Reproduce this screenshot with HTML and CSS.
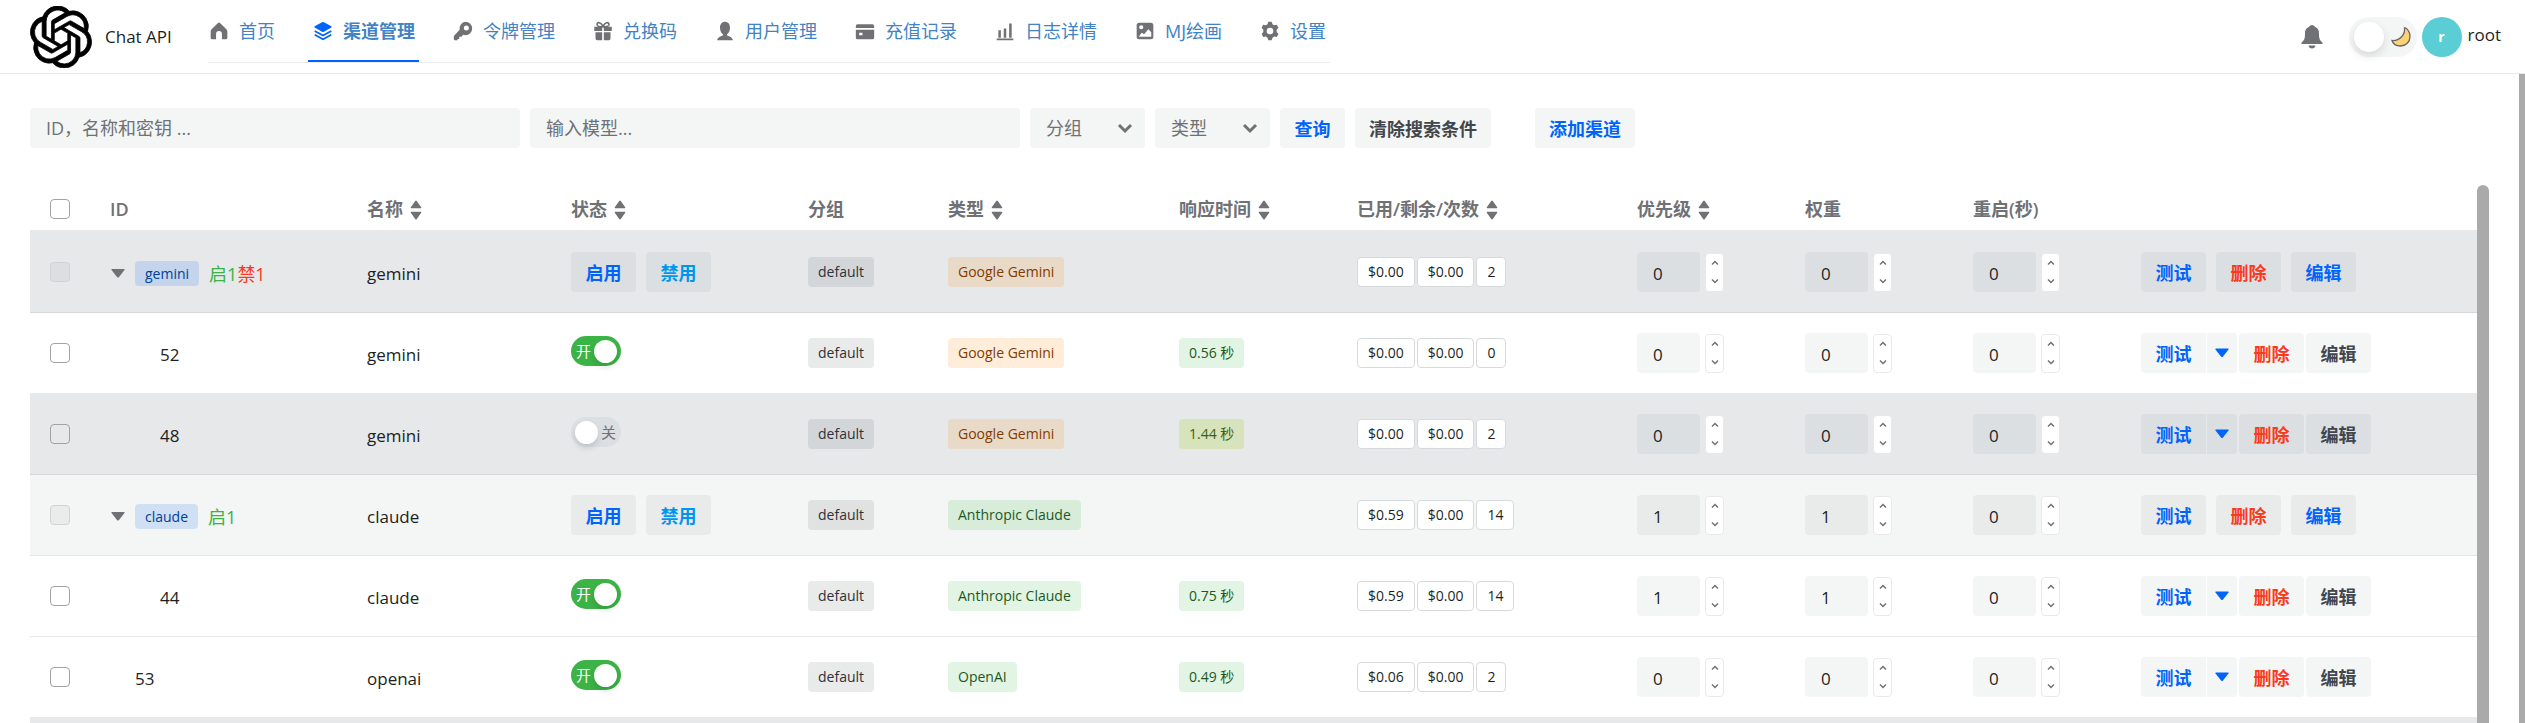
FILE: index.html
```html
<!DOCTYPE html>
<html lang="zh"><head><meta charset="utf-8"><title>Chat API</title><link rel="stylesheet" href="styles.css"></head>
<body>
<svg class="defs" aria-hidden="true">
<symbol id="up" viewBox="0 0 8 6"><path d="M1 4.500l3-3 3 3" fill="none" stroke="currentColor" stroke-width="1.500"/></symbol>
<symbol id="down" viewBox="0 0 8 6"><path d="M1 1.500l3 3 3-3" fill="none" stroke="currentColor" stroke-width="1.500"/></symbol>
<symbol id="sort" viewBox="0 0 12 20"><path d="M5.200 1L.8 7.300Q.3 8.300 1.400 8.300h9.200q1.100 0 .6-1L6.800 1Q6 0 5.200 1zM5.200 19L.8 12.700Q.3 11.700 1.400 11.700h9.200q1.100 0 .6 1L6.800 19Q6 20 5.200 19z" fill="currentColor"/></symbol>
<symbol id="tri" viewBox="0 0 14 9"><path d="M1 0h12q1 0 .5 1L8 8Q7 9 6 8L.5 1Q0 0 1 0z" fill="currentColor"/></symbol>
</svg>
<header class="topbar">
<a class="brand" href="#"><svg class="logo" viewBox="0 0 24 24"><path d="M22.282 9.821a5.985 5.985 0 0 0-.516-4.910 6.046 6.046 0 0 0-6.510-2.900A6.065 6.065 0 0 0 4.981 4.182a5.985 5.985 0 0 0-3.998 2.900 6.046 6.046 0 0 0 .743 7.097 5.980 5.980 0 0 0 .510 4.911 6.051 6.051 0 0 0 6.515 2.900A5.985 5.985 0 0 0 13.260 24a6.056 6.056 0 0 0 5.772-4.206 5.990 5.990 0 0 0 3.997-2.900 6.056 6.056 0 0 0-.747-7.073zM13.260 22.430a4.476 4.476 0 0 1-2.876-1.040l.141-.081 4.779-2.758a.795.795 0 0 0 .392-.681v-6.737l2.020 1.168a.071.071 0 0 1 .038.052v5.583a4.504 4.504 0 0 1-4.494 4.494zM3.600 18.304a4.470 4.470 0 0 1-.535-3.014l.142.085 4.783 2.759a.771.771 0 0 0 .780 0l5.843-3.369v2.332a.080.080 0 0 1-.033.062L9.740 19.950a4.500 4.500 0 0 1-6.140-1.646zM2.340 7.896a4.485 4.485 0 0 1 2.366-1.973V11.600a.766.766 0 0 0 .388.676l5.815 3.355-2.020 1.168a.076.076 0 0 1-.071 0l-4.830-2.786A4.504 4.504 0 0 1 2.340 7.872zm16.597 3.855l-5.833-3.387L15.119 7.200a.076.076 0 0 1 .071 0l4.830 2.791a4.494 4.494 0 0 1-.676 8.105v-5.678a.790.790 0 0 0-.407-.667zm2.010-3.023l-.141-.085-4.774-2.782a.776.776 0 0 0-.785 0L9.409 9.230V6.897a.066.066 0 0 1 .028-.061l4.830-2.787a4.500 4.500 0 0 1 6.680 4.660zm-12.640 4.135l-2.020-1.164a.080.080 0 0 1-.038-.057V6.075a4.500 4.500 0 0 1 7.375-3.453l-.142.080L8.704 5.460a.795.795 0 0 0-.393.681zm1.097-2.365l2.602-1.500 2.607 1.500v2.999l-2.597 1.500-2.607-1.500z" fill="#000" stroke="#000" stroke-width=".3"/></svg><span>Chat API</span></a>
<nav class="tabs">
<a href="#"><svg viewBox="0 0 24 24"><path d="M10.500 2.600a2.200 2.200 0 0 1 3 0l7.400 7.200q1.100 1.100 1.100 2.700V20a2 2 0 0 1-2 2h-4.500v-6.500a3.500 3.500 0 0 0-7 0V22H4a2 2 0 0 1-2-2v-7.500q0-1.600 1.100-2.700z"/></svg>首页</a>
<a href="#" class="on"><svg viewBox="0 0 24 24"><path d="M10.800 1.500q1.200-.6 2.400 0l8.800 4.900q1 .8 0 1.500l-8.800 4.900q-1.200.6-2.400 0L2 7.900q-1-.7 0-1.500z"/><path d="M2 12l10 5.500L22 12M2 16.500L12 22l10-5.500" fill="none" stroke="currentColor" stroke-width="2"/></svg>渠道管理</a>
<a href="#"><svg viewBox="0 0 24 24"><path fill-rule="evenodd" d="M15 1a8 8 0 0 1 0 16q-1.500 0-2.700-.5L10 19H7.500v2.500H5.500V23H2a1 1 0 0 1-1-1v-4l7-7.500A8 8 0 0 1 15 1zm1 4.500a3 3 0 1 0 0 6 3 3 0 0 0 0-6z"/></svg>令牌管理</a>
<a href="#"><svg viewBox="0 0 24 24"><path d="M1.500 7H11v5H1.500zM13 7h9.500v5H13zM3 13.500h8V23H5a2 2 0 0 1-2-2zM13 13.500h8V21a2 2 0 0 1-2 2h-6z"/><path d="M12 7C10 1 4 .5 5 5q.5 2 7 2zm0 0c2-6 8-6.500 7-2q-.5 2-7 2z" fill="none" stroke="currentColor" stroke-width="2"/></svg>兑换码</a>
<a href="#"><svg viewBox="0 0 24 24"><path d="M12 1c3.600 0 6 2.700 6 7 0 3.500-1.500 6.500-3.500 8v1.500C18 18.500 21 20 21.500 23h-19C3 20 6 18.500 9.500 17.500V16C7.500 14.500 6 11.500 6 8c0-4.300 2.400-7 6-7z"/></svg>用户管理</a>
<a href="#"><svg viewBox="0 0 24 24"><path fill-rule="evenodd" d="M3 4h18a2 2 0 0 1 2 2v2.500H1V6a2 2 0 0 1 2-2zM1 10.500h22V20a2 2 0 0 1-2 2H3a2 2 0 0 1-2-2zM5 14v3h4v-3z"/></svg>充值记录</a>
<a href="#"><svg viewBox="0 0 24 24"><path d="M2 21h20v2H2zM4 11h3v9H4zM10.500 9h3v11h-3zM17 3h3v17h-3z"/></svg>日志详情</a>
<a href="#"><svg viewBox="0 0 24 24"><path fill-rule="evenodd" d="M5 2h14a3 3 0 0 1 3 3v14a3 3 0 0 1-3 3H5a3 3 0 0 1-3-3V5a3 3 0 0 1 3-3zm2.500 3a2.500 2.500 0 1 0 0 5 2.500 2.500 0 0 0 0-5zM4.500 19h15v-5.500L16 10l-5 6-3-2z"/></svg>MJ绘画</a>
<a href="#"><svg viewBox="0 0 24 24"><path fill-rule="evenodd" d="M10 1h4l1 3 2 1.200 3.100-.7 2 3.500-2.100 2.400v2.800l2.100 2.500-2 3.500-3.100-.7L15 20l-1 3h-4l-1-3-2-1.500-3.100.7-2-3.500L4 13.200v-2.800L1.900 8l2-3.500 3.100.7L9 4zm2 7a4 4 0 1 0 0 8 4 4 0 0 0 0-8z"/></svg>设置</a>
</nav>
<div class="tools">
<button class="bell" aria-label="通知"><svg viewBox="0 0 22 24"><path d="M11 0c1.500 0 2.500 1 3 2 3.500 1.500 4 4 4 7 0 5 1 6.500 3.500 8.500V19H.5v-1.500C3 15.500 4 14 4 9c0-3 .5-5.500 4-7 .5-1 1.500-2 3-2zM7.500 20.500h7q-.7 3-3.500 3t-3.500-3z" fill="#6f7175"/></svg></button>
<button class="theme" role="switch" aria-checked="false" aria-label="主题"><i></i><svg viewBox="0 0 20 20"><path d="M13.500 1C14.500 7 9 14 1 13.500 2 17 5.500 19 9.500 19 15 19 19 15 19 9.500 19 6 17 2 14.500 1z" fill="#fbd276" stroke="#666" stroke-width="1.300"/></svg></button>
<span class="avatar">r</span><span class="user">root</span>
</div>
</header>
<main class="page">
<section class="content">
<form class="filters">
<input class="field grow" aria-label="ID" placeholder="ID，名称和密钥 ...">
<input class="field grow" aria-label="模型" placeholder="输入模型...">
<span class="pick"><select aria-label="分组"><option>分组</option></select><svg viewBox="0 0 8 6"><use href="#down"/></svg></span>
<span class="pick"><select aria-label="类型"><option>类型</option></select><svg viewBox="0 0 8 6"><use href="#down"/></svg></span>
<button type="button" class="btn blue">查询</button>
<button type="button" class="btn">清除搜索条件</button>
<button type="button" class="btn blue add">添加渠道</button>
</form>
<div class="tablewrap">
<table>
<colgroup><col class="c0"><col class="c1"><col class="c2"><col class="c3"><col class="c4"><col class="c5"><col class="c6"><col class="c7"><col class="c8"><col class="c8"><col class="c8"><col class="c9"></colgroup>
<thead><tr><th><input type="checkbox" aria-label="全选"></th><th>ID</th><th>名称<svg class="sort"><use href="#sort"/></svg></th><th>状态<svg class="sort"><use href="#sort"/></svg></th><th>分组</th><th>类型<svg class="sort"><use href="#sort"/></svg></th><th>响应时间<svg class="sort"><use href="#sort"/></svg></th><th>已用/剩余/次数<svg class="sort"><use href="#sort"/></svg></th><th>优先级<svg class="sort"><use href="#sort"/></svg></th><th>权重</th><th>重启(秒)</th><th></th></tr></thead>
<tbody id="rows"></tbody>
</table>
<div class="bar inner"></div>
</div>
</section>
<div class="bar outer"></div>
</main>
<script src="app.js"></script>
</body></html>
```

FILE: app.js
```js
const rows = [
  { group: true, tone: 'dark', on: 1, off: 1, name: 'gemini', type: 'Google Gemini', color: 'orange', used: ['$0.00', '$0.00', '2'], p: 0, w: 0 },
  { id: 52, child: true, name: 'gemini', state: true, type: 'Google Gemini', color: 'orange', time: '0.56', used: ['$0.00', '$0.00', '0'], p: 0, w: 0 },
  { id: 48, child: true, tone: 'dark', name: 'gemini', state: false, type: 'Google Gemini', color: 'orange', time: '1.44', slow: true, used: ['$0.00', '$0.00', '2'], p: 0, w: 0 },
  { group: true, tone: 'light', on: 1, name: 'claude', type: 'Anthropic Claude', color: 'green', used: ['$0.59', '$0.00', '14'], p: 1, w: 1 },
  { id: 44, child: true, name: 'claude', state: true, type: 'Anthropic Claude', color: 'green', time: '0.75', used: ['$0.59', '$0.00', '14'], p: 1, w: 1 },
  { id: 53, name: 'openai', state: true, type: 'OpenAI', color: 'green', time: '0.49', used: ['$0.06', '$0.00', '2'], p: 0, w: 0 },
  { tone: 'dark', empty: true }
];

const icon = (name, cls) => `<svg class="${cls}"><use href="#${name}"/></svg>`;
const stepper = (value, label) =>
  `<div class="num"><input class="field" value="${value}" aria-label="${label}"><span class="spin"><button aria-label="增加">${icon('up', 'chev')}</button><button aria-label="减少">${icon('down', 'chev')}</button></span></div>`;

function idCell(r) {
  if (!r.group) return `<span class="${r.child ? 'child' : 'root'}">${r.id}</span>`;
  return `<div class="id"><button class="fold" aria-label="折叠">${icon('tri', 'arrow')}</button><span class="tag small blue-tag">${r.name}</span><span class="counts"><span class="ok">启${r.on}</span>${r.off ? `<span class="bad">禁${r.off}</span>` : ''}</span></div>`;
}

function stateCell(r) {
  if (r.group) return '<div class="btns"><button class="btn blue">启用</button><button class="btn sky">禁用</button></div>';
  return `<button class="switch ${r.state ? 'is-on' : ''}" role="switch" aria-checked="${r.state}"><span>${r.state ? '开' : '关'}</span><i></i></button>`;
}

function actionCell(r) {
  if (r.group) return '<div class="btns"><button class="btn blue">测试</button><button class="btn red">删除</button><button class="btn blue">编辑</button></div>';
  return `<div class="btns tight"><span class="split"><button class="btn blue">测试</button><button class="btn blue more" aria-label="更多">${icon('tri', 'caret')}</button></span><button class="btn red">删除</button><button class="btn">编辑</button></div>`;
}

document.getElementById('rows').innerHTML = rows.map(r => {
  if (r.empty) return '<tr class="dark"><td colspan="12"></td></tr>';
  return `<tr class="${r.tone || ''}">
    <td><input type="checkbox" aria-label="选择 ${r.id || r.name}" ${r.group ? 'disabled' : ''}></td>
    <td class="text">${idCell(r)}</td><td class="text">${r.name}</td><td>${stateCell(r)}</td>
    <td><span class="tag grey-tag">default</span></td>
    <td><span class="tag ${r.color}">${r.type}</span></td>
    <td>${r.time ? `<span class="tag ${r.slow ? 'lime' : 'green'}">${r.time} 秒</span>` : ''}</td>
    <td><div class="used">${r.used.map(u => `<span class="tag white">${u}</span>`).join('')}</div></td>
    <td>${stepper(r.p, '优先级')}</td><td>${stepper(r.w, '权重')}</td><td>${stepper(0, '重启')}</td>
    <td>${actionCell(r)}</td></tr>`;
}).join('');
```

FILE: styles.css
```css
* { box-sizing: border-box; }
body {
  margin: 0; height: 100vh; overflow: hidden; display: flex; flex-direction: column;
  background: #fff; color: #1c1f23; font: 18px/24px "Open Sans", "Noto Sans CJK SC", sans-serif;
}
button, input, select { font: inherit; color: inherit; border: 0; margin: 0; padding: 0; background: none; }
a { text-decoration: none; }
.defs { display: none; }

.topbar { display: flex; flex: none; height: 74px; border-bottom: 1px solid #e9e9ea; padding: 0 24px 0 30px; }
.brand { display: flex; align-items: center; gap: 13px; width: 178px; color: #1c1f23; font-size: 17px; }
.logo { width: 62px; height: 62px; flex: none; }
.tabs { display: flex; gap: 29px; height: 63px; border-bottom: 1px solid #ebebec; }
.tabs a { display: flex; align-items: center; gap: 9px; padding: 2px 4px 0; height: 62px; color: #4183c4; white-space: nowrap; border-bottom: 2px solid transparent; }
.tabs a:first-child { padding-left: 0; }
.tabs svg { width: 22px; height: 20px; fill: #6f7175; color: #6f7175; }
.tabs .on { font-weight: 700; border-color: #0064fa; }
.tabs .on svg { fill: #0064fa; color: #0064fa; }
.tools { display: flex; align-items: center; margin-left: auto; }
.bell { width: 22px; height: 24px; margin-right: 26px; }
.bell svg { width: 22px; height: 24px; display: block; }
.theme { display: flex; align-items: center; justify-content: space-between; width: 68px; height: 40px; padding: 0 6px 0 5px; border-radius: 20px; background: #f4f6f5; }
.theme i { width: 30px; height: 30px; border-radius: 50%; background: #fff; box-shadow: 0 4px 8px rgba(0,0,0,.12); }
.theme svg { width: 20px; height: 20px; }
.avatar { width: 40px; height: 40px; margin: 0 6px 0 5px; border-radius: 50%; background: #5bcdd4; color: #fff; font-weight: 700; font-size: 14px; line-height: 40px; text-align: center; }
.user { font-size: 17px; padding-bottom: 4px; }

.page { display: flex; flex: 1; min-height: 0; }
.content { flex: 1; min-width: 0; display: flex; flex-direction: column; padding: 34px 30px 0; }
.bar { flex: none; background: #aaa; }
.outer { width: 6px; }
.inner { width: 12px; border-radius: 6px 6px 0 0; }
.filters { display: flex; gap: 10px; margin-bottom: 37px; padding-right: 854px; }
.field { height: 40px; min-width: 0; padding: 0 16px; border-radius: 4px; background: #f4f6f5; }
.grow { flex: 1; }
.field::placeholder { color: #6f7175; opacity: 1; }
.pick { position: relative; width: 115px; height: 40px; flex: none; }
.pick select { width: 100%; height: 100%; padding: 0 16px; border-radius: 4px; background: #f4f6f5; color: #6f7175; appearance: none; }
.pick svg { position: absolute; right: 12px; top: 14px; width: 16px; height: 12px; color: #6f7175; pointer-events: none; }
.btn { flex: none; height: 40px; min-width: 65px; padding: 2px 14px 0; border-radius: 4px; background: #f4f6f5; color: #41464c; font-weight: 700; white-space: nowrap; }
.blue { color: #0064fa; }
.sky { color: #0095ee; }
.red { color: #f93920; }
.add { margin-left: 34px; }

.tablewrap { display: flex; flex: 1; min-height: 0; overflow: hidden; }
table { flex: 1; width: 100%; table-layout: fixed; border-collapse: separate; border-spacing: 0; height: max-content; }
.c0 { width: 60px; } .c1 { width: 257px; } .c2 { width: 204px; } .c3 { width: 237px; } .c4 { width: 140px; }
.c5 { width: 231px; } .c6 { width: 178px; } .c7 { width: 280px; } .c8 { width: 168px; } .c9 { width: 356px; }
th { height: 47px; padding: 2px 20px 0; text-align: left; color: #6f7175; font-weight: 600; border-bottom: 2px solid #e9e9ea; white-space: nowrap; }
td { height: 81px; padding: 0 20px; border-bottom: 1px solid #e9e9ea; white-space: nowrap; }
.text { padding-top: 3px; font-size: 17px; }
.dark td { background: #e6e8ea; border-color: #d5d7da; }
.light td { background: #f4f6f5; border-color: #e2e4e5; }
.sort { width: 12px; height: 20px; margin-left: 7px; vertical-align: -4px; }
input[type=checkbox] { appearance: none; display: block; width: 20px; height: 20px; border: 1px solid #a0a2a4; border-radius: 4px; }
input[type=checkbox]:disabled { background: rgba(46,50,56,.05); border-color: #d0d2d4; }
.id { display: flex; align-items: center; gap: 10px; }
.fold { width: 15px; height: 20px; display: flex; align-items: center; justify-content: center; color: #6f7175; }
.arrow { width: 14px; height: 9px; }
.counts { font-size: 18px; }
.ok { color: #3bb346; } .bad { color: #f93920; }
.child { padding-left: 50px; } .root { padding-left: 25px; }
.tag { display: inline-block; height: 30px; padding: 0 10px; border-radius: 4px; font-size: 14px; line-height: 30px; vertical-align: middle; }
.small { height: 25px; line-height: 25px; }
.blue-tag { background: rgba(0,100,250,.15); color: #004098; }
.grey-tag { background: rgba(107,112,117,.15); color: #2e3238; }
.orange { background: rgba(252,136,0,.15); color: #803b00; }
.green { background: rgba(59,179,70,.15); color: #1b5924; }
.lime { background: rgba(155,209,0,.2); color: #40600a; }
.white { background: #fff; border: 1px solid #d7dadd; line-height: 28px; }
.used { display: flex; gap: 2px; }
.btns { display: flex; gap: 10px; }
.tight { gap: 2px; }
.split { display: flex; gap: 1px; }
.split .btn { border-radius: 4px 0 0 4px; }
.split .more { min-width: 0; padding: 0 8px; border-radius: 0 4px 4px 0; }
.caret { width: 14px; height: 10px; display: block; }
.dark .btn, .dark .field { background: #dbdfe2; }
.light .btn, .light .field { background: #e9ebeb; }
.num { display: flex; align-items: center; gap: 5px; }
.num .field { width: 63px; padding-top: 2px; font-size: 17px; }
.spin { display: flex; flex-direction: column; width: 19px; height: 39px; border: 1px solid #e9e9ea; border-radius: 4px; background: #fff; color: #6f7175; }
.spin button { flex: 1; display: flex; align-items: center; justify-content: center; }
.chev { width: 8px; height: 6px; }
.switch { display: flex; align-items: center; flex-direction: row-reverse; justify-content: space-between; width: 50px; height: 30px; margin-bottom: 4px; padding: 0 5px 0 4px; border-radius: 15px; background: #dbdfe2; color: #6f7175; font-size: 15px; line-height: 26px; }
.switch i { width: 23px; height: 23px; border-radius: 50%; background: #fff; box-shadow: 0 4px 6px rgba(0,0,0,.12); }
.is-on { flex-direction: row; padding: 0 4px 0 5px; background: #3bb346; color: #fff; }
```
